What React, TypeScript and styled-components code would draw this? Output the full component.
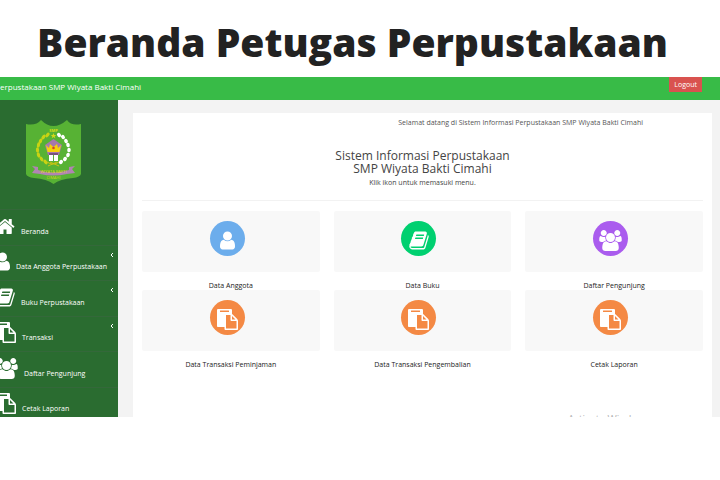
import React from "react";
import styled, { createGlobalStyle } from "styled-components";

const GlobalStyle = createGlobalStyle`
  * { box-sizing: border-box; }
  body { margin: 0; background: #fff; font-family: "Open Sans", sans-serif; font-size: 7px; color: #222; }
  h1, h2, p, ul { margin: 0; padding: 0; }
`;

const Title = styled.h1`
  height: 77px;
  padding: 12px 15px 0 0;
  text-align: center;
  white-space: nowrap;
  font: 800 39px/60px "Open Sans", sans-serif;
  color: #222;
`;

const Screen = styled.div`
  position: relative;
  display: flex;
  flex-direction: column;
  max-height: 340px;
  overflow: hidden;
  background: #f3f3f3;
`;

const TopBar = styled.header`
  display: flex;
  justify-content: space-between;
  align-items: flex-start;
  flex: none;
  height: 23px;
  padding-right: 18px;
  background: #38bb47;
`;

const Brand = styled.span`
  font-size: 8px;
  line-height: 20px;
  color: #fff;
  white-space: nowrap;
`;

const Logout = styled.button`
  height: 15px;
  padding: 0 5px;
  border: 0;
  background: #d9534f;
  color: #fff;
  font: 7px/15px "Open Sans", sans-serif;
`;

const Body = styled.div`
  display: flex;
  align-items: stretch;
`;

const Sidebar = styled.aside`
  flex: 0 0 118px;
  overflow: hidden;
  background: #2a6c30;
`;

const LogoBox = styled.div`
  display: flex;
  height: 109px;
  padding: 19px 0 0 26px;
`;

const NavList = styled.ul`
  display: grid;
  grid-auto-rows: 1fr;
  min-height: 213px;
  list-style: none;
`;

const NavItem = styled.li`
  display: flex;
  border-top: 1px solid #34683a;
`;

const NavLink = styled.a`
  display: flex;
  flex: 1;
  align-items: flex-end;
  margin-left: -5px;
  padding: 0 4px 9px 0;
  color: #fff;
  font-size: 7px;
  line-height: 8px;
  text-decoration: none;
  white-space: nowrap;
`;

const NavIcon = styled.span`
  display: flex;
  margin: 0 6px -1px 0;
`;

const Chevron = styled.svg`
  flex: none;
  align-self: flex-start;
  margin: 6px 0 0 auto;
`;

const Panel = styled.main`
  flex: 1;
  min-height: 317px;
  margin: 13px 8px 0 15px;
  padding: 5px 9px 0;
  background: #fff;
`;

const Greeting = styled.p`
  padding-right: 60px;
  text-align: right;
  line-height: 10px;
  color: #555;
`;

const Intro = styled.div`
  margin-top: 21px;
  padding-bottom: 12px;
  border-bottom: 1px solid #f2f2f2;
  text-align: center;
  color: #444;
`;

const Heading = styled.h2`
  font-size: 12px;
  line-height: 13px;
  font-weight: 400;
`;

const Hint = styled.p`
  margin-top: 3px;
  line-height: 10px;
`;

const Menu = styled.div`
  display: grid;
  grid-template-columns: repeat(3, 1fr);
  column-gap: 14px;
  margin-top: 10px;
`;

const Tile = styled.a`
  display: block;
  color: #222;
  text-align: center;
  text-decoration: none;
`;

const TileFace = styled.span`
  display: flex;
  justify-content: center;
  height: 61px;
  padding: 10px 7px 0 0;
  border-radius: 2px;
  background: #f8f8f8;
`;

const Disc = styled.span<{ $color: string }>`
  display: flex;
  align-items: center;
  justify-content: center;
  width: 35px;
  height: 35px;
  padding-top: 3px;
  border-radius: 50%;
  background: ${(p) => p.$color};
  color: #fff;
`;

const TileLabel = styled.span`
  display: block;
  padding-top: 9px;
  line-height: 9px;
`;

const Watermark = styled.span`
  position: absolute;
  right: 70px;
  bottom: -9px;
  font-size: 10px;
  line-height: 14px;
  color: #b5b5b5;
`;

const icons = {
  home: {
    x: 64, w: 1664,
    d: "M1472 992v480q0 26-19 45t-45 19h-384v-384h-256v384h-384q-26 0-45-19t-19-45v-480q0-1 .5-3t.5-3l575-474 575 474q1 2 1 6zm223-69l-62 74q-8 9-21 11h-3q-13 0-21-7l-692-577-692 577q-12 8-24 7-13-2-21-11l-62-74q-8-10-7-23.5t11-21.5l719-599q32-26 76-26t76 26l244 204v-195q0-14 9-23t23-9h192q14 0 23 9t9 23v408l219 182q10 8 11 21.5t-7 23.5z",
  },
  user: {
    x: 256, w: 1280,
    d: "M1536 1399q0 109-62.5 187t-150.5 78h-854q-88 0-150.5-78t-62.5-187q0-85 8.5-160.5t31.5-152 58.5-131 94-89 134.5-34.5q131 128 313 128t313-128q76 0 134.5 34.5t94 89 58.5 131 31.5 152 8.5 160.5zm-256-887q0 159-112.5 271.5t-271.5 112.5-271.5-112.5-112.5-271.5 112.5-271.5 271.5-112.5 271.5 112.5 112.5 271.5z",
  },
  book: {
    x: 64, w: 1664,
    d: "M1703 478q40 57 18 129l-275 906q-19 64-76.5 107.5t-122.5 43.5h-923q-77 0-148.5-53.5t-99.5-131.5q-24-67-2-127 0-4 3-27t4-37q1-8-3-21.5t-3-19.5q2-11 8-21t16.5-23.5 16.5-23.5q23-38 45-91.5t30-91.5q3-10 .5-30t-.5-28q3-11 17-28t17-23q21-36 42-92t25-90q1-9-2.5-32t.5-28q4-13 22-30.5t22-22.5q19-26 42.5-84.5t27.5-96.5q1-8-3-25.5t-2-26.5q2-8 9-18t18-23 17-21q8-12 16.5-30.5t15-35 16-36 19.5-32 26.5-23.5 36-11.5 47.5 5.5l-1 3q38-9 51-9h761q74 0 114 56t18 130l-274 906q-36 119-71.5 153.5t-128.5 34.5h-869q-27 0-38 15-11 16-1 43 24 70 144 70h923q29 0 56-15.5t35-41.5l300-987q7-22 5-57 38 15 59 43zm-1064 2q-4 13 2 22.5t20 9.5h608q13 0 25.5-9.5t16.5-22.5l21-64q4-13-2-22.5t-20-9.5h-608q-13 0-25.5 9.5t-16.5 22.5zm-83 256q-4 13 2 22.5t20 9.5h608q13 0 25.5-9.5t16.5-22.5l21-64q4-13-2-22.5t-20-9.5h-608q-13 0-25.5 9.5t-16.5 22.5z",
  },
  paste: {
    x: 0, w: 1792,
    d: "M768 1664h896v-640h-416q-40 0-68-28t-28-68v-416h-384v1152zm256-1440v-64q0-13-9.5-22.5t-22.5-9.5h-704q-13 0-22.5 9.5t-9.5 22.5v64q0 13 9.5 22.5t22.5 9.5h704q13 0 22.5-9.5t9.5-22.5zm256 672h299l-299-299v299zm512 128v672q0 40-28 68t-68 28h-960q-40 0-68-28t-28-68v-160h-544q-40 0-68-28t-28-68v-1344q0-40 28-68t68-28h1088q40 0 68 28t28 68v328q21 13 36 28l408 408q28 28 48 76t20 88z",
  },
  users: {
    x: 0, w: 1920,
    d: "M593 896q-162 5-265 128h-134q-82 0-138-40.5t-56-118.5q0-353 124-353 6 0 43.5 21t97.5 42.5 119 21.5q67 0 133-23-5 37-5 66 0 139 81 256zm1071 637q0 120-73 189.5t-194 69.5h-874q-121 0-194-69.5t-73-189.5q0-53 3.5-103.5t14-109 26.5-108.5 43-97.5 62-81 85.5-53.5 111.5-20q10 0 43 21.5t73 48 107 48 135 21.5 135-21.5 107-48 73-48 43-21.5q61 0 111.5 20t85.5 53.5 62 81 43 97.5 26.5 108.5 14 109 3.5 103.5zm-1024-1277q0 106-75 181t-181 75-181-75-75-181 75-181 181-75 181 75 75 181zm704 384q0 159-112.5 271.5t-271.5 112.5-271.5-112.5-112.5-271.5 112.5-271.5 271.5-112.5 271.5 112.5 112.5 271.5zm576 225q0 78-56 118.5t-138 40.5h-134q-103-123-265-128 81-117 81-256 0-29-5-66 66 23 133 23 59 0 119-21.5t97.5-42.5 43.5-21q124 0 124 353zm-128-609q0 106-75 181t-181 75-181-75-75-181 75-181 181-75 181 75 75 181z",
  },
};

type IconName = keyof typeof icons;

function Icon({ name, size }: { name: IconName; size: number }) {
  const { x, w, d } = icons[name];
  return (
    <svg width={Math.round((size * w) / 1792)} height={size} viewBox={`${x} 0 ${w} 1792`} fill="currentColor" aria-hidden="true">
      <path d={d} />
    </svg>
  );
}

function SchoolLogo() {
  const beads = [[33, 16], [37, 18], [40, 22], [42, 26], [43, 31], [42, 36], [39, 40], [35, 43]];
  return (
    <svg width="55" height="65" viewBox="0 0 55 65" role="img" aria-label="SMP Wiyata Bakti Cimahi">
      <path d="M0 5Q10 7 15 1Q27 13 41 1Q45 7 55 5V55Q54 58 47 59Q34 60 27.500 65Q21 60 8 59Q1 58 0 55Z" fill="#57b234" />
      {beads.map(([x, y]) => (
        <g key={y}>
          <ellipse cx={x} cy={y} rx="1.800" ry="2.300" fill="#fff" transform={`rotate(${(y - 30) * 3} ${x} ${y})`} />
          <ellipse cx={54.5 - x} cy={y} rx="1.600" ry="2.700" fill="#c9d313" transform={`rotate(${(30 - y) * 3} ${54.5 - x} ${y})`} />
        </g>
      ))}
      <path d="M21 43Q27 47 33 43M22 47L31 43M33 47L24 43" stroke="#c9c313" fill="none" />
      <path d="M27.500 14l.8 2h2l-1.600 1.300.6 2-1.800-1.200-1.800 1.200.6-2-1.600-1.300h2z" fill="#d5d71a" />
      <path d="M27.500 20L36 26L33 36H22L19 26Z" fill="#a678ad" />
      <path d="M20 26l3 3 1-4 3.500 3 3.500-3 1 4 3-3-1.500 7h-12z" fill="#f5d20c" />
      <circle cx="27.500" cy="29" r="1.300" fill="#d64a25" />
      <path d="M23 34h9v2h-9z" fill="#77537d" />
      <path d="M23 36h4v6h-4zM28 36h4v6h-4z" fill="#fff" />
      <path d="M6 47l6 1v3q15 5 31 0v-3l6-1-3 3 3 4-8 1q-14 3-27 0l-8-1 3-4z" fill="#b184b3" />
      <text x="27.500" y="13" fontSize="4" fontWeight="700" textAnchor="middle" fill="#d8dc18">SMP</text>
      <text x="27.500" y="54" fontSize="4" textAnchor="middle" fill="#e6d81a">WIYATA BAKTI</text>
      <text x="27.500" y="60" fontSize="4" textAnchor="middle" fill="#d3dd1a">CIMAHI</text>
    </svg>
  );
}

const nav: { icon: IconName; label: string; more?: boolean }[] = [
  { icon: "home", label: "Beranda" },
  { icon: "user", label: "Data Anggota Perpustakaan", more: true },
  { icon: "book", label: "Buku Perpustakaan", more: true },
  { icon: "paste", label: "Transaksi", more: true },
  { icon: "users", label: "Daftar Pengunjung" },
  { icon: "paste", label: "Cetak Laporan" },
];

const tiles: { icon: IconName; label: string; color: string }[] = [
  { icon: "user", label: "Data Anggota", color: "#6cadec" },
  { icon: "book", label: "Data Buku", color: "#00d070" },
  { icon: "users", label: "Daftar Pengunjung", color: "#aa5cee" },
  { icon: "paste", label: "Data Transaksi Peminjaman", color: "#f48944" },
  { icon: "paste", label: "Data Transaksi Pengembalian", color: "#f48944" },
  { icon: "paste", label: "Cetak Laporan", color: "#f48944" },
];

export default function App() {
  return (
    <>
      <GlobalStyle />
      <Title>Beranda Petugas Perpustakaan</Title>
      <Screen>
        <TopBar>
          <Brand>erpustakaan SMP Wiyata Bakti Cimahi</Brand>
          <Logout type="button">Logout</Logout>
        </TopBar>
        <Body>
          <Sidebar>
            <LogoBox><SchoolLogo /></LogoBox>
            <nav>
              <NavList>
                {nav.map((item) => (
                  <NavItem key={item.label}>
                    <NavLink href="#">
                      <NavIcon><Icon name={item.icon} size={21} /></NavIcon>
                      {item.label}
                      {item.more && (
                        <Chevron width="4" height="6" viewBox="0 0 4 6" fill="none" stroke="#fff" aria-hidden="true">
                          <path d="M3 1L1 3L3 5" />
                        </Chevron>
                      )}
                    </NavLink>
                  </NavItem>
                ))}
              </NavList>
            </nav>
          </Sidebar>
          <Panel>
            <Greeting>Selamat datang di Sistem Informasi Perpustakaan SMP Wiyata Bakti Cimahi</Greeting>
            <Intro>
              <Heading>Sistem Informasi Perpustakaan<br />SMP Wiyata Bakti Cimahi</Heading>
              <Hint>Klik ikon untuk memasuki menu.</Hint>
            </Intro>
            <Menu>
              {tiles.map((tile) => (
                <Tile key={tile.label} href="#">
                  <TileFace>
                    <Disc $color={tile.color}><Icon name={tile.icon} size={21} /></Disc>
                  </TileFace>
                  <TileLabel>{tile.label}</TileLabel>
                </Tile>
              ))}
            </Menu>
          </Panel>
        </Body>
        <Watermark>Activate Windows</Watermark>
      </Screen>
    </>
  );
}
